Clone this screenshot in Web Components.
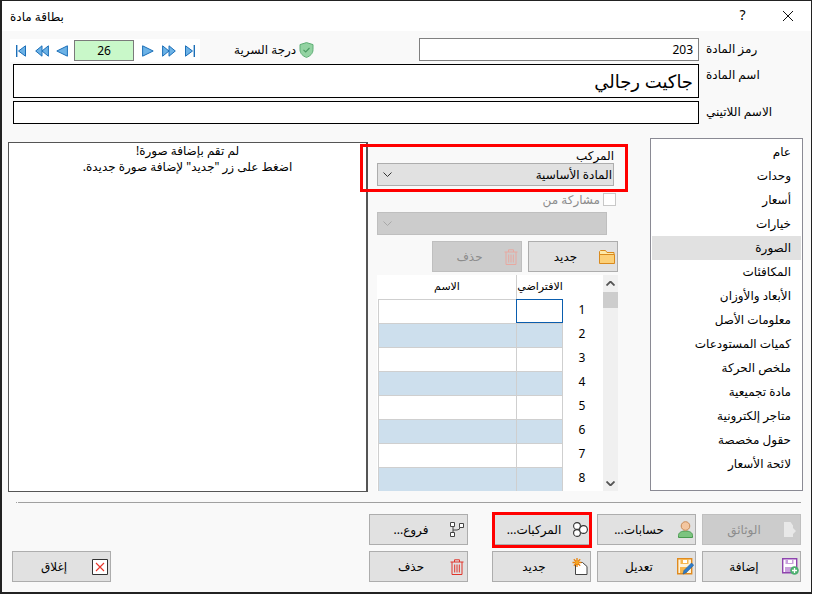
<!DOCTYPE html>
<html lang="ar">
<head>
<meta charset="utf-8">
<title>بطاقة مادة</title>
<style>
  html, body { margin: 0; padding: 0; background: #fff; }
  body { font: 12px "Noto Sans", "DejaVu Sans", sans-serif; color: #000; }
</style>
</head>
<body>
<item-card></item-card>

<script>
/* ── Icons ─────────────────────────────────────────── */
const ICONS = {
  folder: '<svg width="16" height="15" viewBox="0 0 16 15"><path d="M.5 14V2.500l1-1h5l1.500 2h7v2" fill="#fde9a8" stroke="#d98a1e"/><path d="M.5 14.500V5.500h15v9z" fill="#fcd078" stroke="#d98a1e"/></svg>',
  trash: '<svg width="14" height="16" viewBox="0 0 14 16" fill="none" stroke="#e0352b"><path d="M.5 3h13M4.500 3V.8h5V3M2 3v12.500h10V3M4.700 5.500v8M7 5.500v8M9.300 5.500v8"/></svg>',
  trashOff: '<svg width="14" height="16" viewBox="0 0 14 16" fill="none" stroke="#e8a8a0"><path d="M.5 3h13M4.500 3V.8h5V3M2 3v12.500h10V3M4.700 5.500v8M7 5.500v8M9.300 5.500v8"/></svg>',
  save: '<svg width="17" height="17" viewBox="0 0 17 17"><path d="M.7.7h14v14H.7z" fill="#fff" stroke="#8e44ad" stroke-width="1.400"/><path d="M3.500 1h8v5h-8zM3 9h9v5H3z" fill="#c9a0dc"/><path d="M6 2h4v3H6z" fill="#fff"/><circle cx="12.500" cy="12.500" r="4.300" fill="#4caf70"/><path d="M12.500 10v5M10 12.500h5" stroke="#fff" stroke-width="1.300"/></svg>',
  edit: '<svg width="17" height="17" viewBox="0 0 17 17"><path d="M.7.7h14v15H.7z" fill="#fff3d8" stroke="#e08a1e" stroke-width="1.400"/><path d="M3.500 1h8v5h-8z" fill="#f6b64e"/><path d="M6 2h4v3H6z" fill="#fff"/><path d="M3 9h7v6H3z" fill="#f6b64e"/><path d="M6 16l1-3.500 7.500-7.500 2.200 2.200-7.500 7.500z" fill="#2f7cc9" stroke="#1d5c9c" stroke-width=".6"/></svg>',
  add: '<svg width="16" height="17" viewBox="0 0 16 17"><path d="M3.500 4.500h7l4.500 4v8H3.500z" fill="#fff" stroke="#444"/><path d="M5 0v9M.5 4.500h9M1.800 1.300l6.400 6.400M8.200 1.300L1.800 7.700" stroke="#e8820c" stroke-width="1.300"/><circle cx="5" cy="4.500" r="1.800" fill="#f5a623"/></svg>',
  close: '<svg width="16" height="16" viewBox="0 0 16 16"><path d="M.5.5h15v15H.5z" fill="#fff" stroke="#333"/><path d="M4 4l8 8M12 4l-8 8" stroke="#e8352b" stroke-width="1.100"/></svg>',
  doc: '<svg width="12" height="15" viewBox="0 0 12 15"><path d="M0 0h6.500L9 3.500V6l3 3-3 3v3H0z" fill="#e8e8e8"/></svg>',
  person: '<svg width="15" height="17" viewBox="0 0 15 17"><path d="M.5 16.500v-2c0-3 3-4.500 7-4.500s7 1.500 7 4.500v2z" fill="#7cc47f" stroke="#4a9a50"/><circle cx="7.500" cy="5" r="4.300" fill="#f3c6a0" stroke="#c98a55"/></svg>',
  parts: '<svg width="16" height="15" viewBox="0 0 16 15" fill="#fff" stroke="#333" stroke-width="1.100"><circle cx="5" cy="4" r="3.400"/><circle cx="5" cy="11" r="3.400"/><circle cx="11.500" cy="7.500" r="3.900"/></svg>',
  branch: '<svg width="14" height="15" viewBox="0 0 14 15" fill="#fff" stroke="#444"><path d="M3 3v9M3 8h4q3 0 3-3" fill="none"/><path d="M.5.500h4v4h-4zM9.500 1.500h4v4h-4zM.5 10.500h4v4h-4z"/></svg>',
  first: '<svg width="10" height="12" viewBox="0 0 10 12"><path d="M.7 0v12" stroke="#1c6fb8" stroke-width="1.400"/><path d="M9.500.8L2.500 6l7 5.200z" fill="#6cb2e6" stroke="#1c6fb8"/></svg>',
  prevPage: '<svg width="14" height="12" viewBox="0 0 14 12" fill="#6cb2e6" stroke="#1c6fb8"><path d="M7 .8L.7 6 7 11.200z"/><path d="M13.400.8L7 6l6.400 5.200z"/></svg>',
  prev: '<svg width="12" height="12" viewBox="0 0 12 12"><path d="M11.400.8L.8 6l10.600 5.200z" fill="#6cb2e6" stroke="#1c6fb8"/></svg>',
  next: '<svg width="12" height="12" viewBox="0 0 12 12"><path d="M.6.8L11.200 6 .6 11.200z" fill="#6cb2e6" stroke="#1c6fb8"/></svg>',
  nextPage: '<svg width="14" height="12" viewBox="0 0 14 12" fill="#6cb2e6" stroke="#1c6fb8"><path d="M.6.8L7 6 .6 11.200z"/><path d="M7 .8L13.300 6 7 11.200z"/></svg>',
  last: '<svg width="10" height="12" viewBox="0 0 10 12"><path d="M9.300 0v12" stroke="#1c6fb8" stroke-width="1.400"/><path d="M.5.8l7 5.200-7 5.200z" fill="#6cb2e6" stroke="#1c6fb8"/></svg>',
  shield: '<svg width="15" height="16" viewBox="0 0 15 16"><path d="M7.500.6l6.500 2v5c0 4-3 6.600-6.500 7.800C4 14.200 1 11.600 1 7.600v-5z" fill="#93d3a2" stroke="#5fae76"/><path d="M4.500 7.800l2.200 2.200 3.800-4" fill="none" stroke="#4b9a63" stroke-width="1.100"/></svg>',
  chevron: '<svg width="9" height="5" viewBox="0 0 9 5" fill="none" stroke="currentColor"><path d="M.5.500l4 4 4-4"/></svg>',
};

/* ── <title-bar> ───────────────────────────────────── */
class TitleBar extends HTMLElement {
  connectedCallback() {
    this.attachShadow({ mode: "open" }).innerHTML = `
      <style>
        :host { display: flex; height: 30px; background: #fff; align-items: center; }
        .cap { width: 46px; text-align: center; font-size: 14px; }
        .cap svg { display: block; margin: auto; }
        .help { padding: 0 0 3px 1px; box-sizing: border-box; }
        .title { margin-right: auto; padding-left: 8px; font-size: 12px; }
      </style>
      <div class="cap"><svg width="10" height="10" viewBox="0 0 10 10" stroke="#111" fill="none"><path d="M0 0l10 10M10 0L0 10"/></svg></div>
      <div class="cap help">?</div>
      <div class="title"><slot></slot></div>`;
  }
}
customElements.define("title-bar", TitleBar);

/* ── <record-nav> ──────────────────────────────────── */
class RecordNav extends HTMLElement {
  connectedCallback() {
    const cell = (name, w) => `<span class="cell" style="width:${w}px">${ICONS[name]}</span>`;
    this.attachShadow({ mode: "open" }).innerHTML = `
      <style>
        :host { display: flex; direction: ltr; width: 190px; height: 23px; margin-top: 1px; background: #fff; align-items: center; }
        .cell { display: flex; justify-content: center; align-items: center; }
        .cell svg { display: block; }
        .num { box-sizing: border-box; width: 60px; height: 21px; margin: 0 2px; background: #c9f8c9; border: 1px solid #7a7a7a;
               text-align: center; line-height: 19px; font-size: 12px; }
      </style>
      ${cell("first", 22)}${cell("prevPage", 20)}${cell("prev", 20)}
      <div class="num">26</div>
      ${cell("next", 23)}${cell("nextPage", 20)}${cell("last", 21)}`;
  }
}
customElements.define("record-nav", RecordNav);

/* ── <text-field> ──────────────────────────────────── */
class TextField extends HTMLElement {
  connectedCallback() {
    this.attachShadow({ mode: "open" }).innerHTML = `
      <style>
        :host { display: flex; box-sizing: border-box; align-items: center; background: #fff;
                border: 1px solid var(--edge, #000); padding: 0 5px; font-size: var(--size, 12px); }
      </style>
      <slot></slot>`;
  }
}
customElements.define("text-field", TextField);

/* ── <combo-box> ───────────────────────────────────── */
class ComboBox extends HTMLElement {
  connectedCallback() {
    const off = this.hasAttribute("disabled");
    this.attachShadow({ mode: "open" }).innerHTML = `
      <style>
        :host { display: flex; box-sizing: border-box; height: 23px; align-items: center; justify-content: space-between;
                padding: 0 1px 0 5px; background: ${off ? "#ccc" : "#e1e1e1"}; border: 1px solid ${off ? "#bfbfbf" : "#adadad"};
                color: ${off ? "#a8a8a8" : "#333"}; }
        .text { color: #000; }
        svg { display: block; }
      </style>
      <span class="text"><slot></slot></span>${ICONS.chevron}`;
  }
}
customElements.define("combo-box", ComboBox);

/* ── <win-button> ──────────────────────────────────── */
class WinButton extends HTMLElement {
  connectedCallback() {
    const off = this.hasAttribute("disabled");
    this.attachShadow({ mode: "open" }).innerHTML = `
      <style>
        :host { display: flex; position: relative; box-sizing: border-box; height: 31px; align-items: center;
                background: ${off ? "#ccc" : "#e1e1e1"}; border: 1px solid ${off ? "#bfbfbf" : "#adadad"};
                color: ${off ? "#8c8c8c" : "#000"}; padding-right: 1px; }
        :host([mark])::after { content: ""; position: absolute; inset: -3px -2px -4px -1px; border: 3px solid #f00; pointer-events: none; }
        .icon { width: 18px; display: flex; justify-content: center; flex: none; }
        .icon svg { display: block; }
        .label { flex: 1; text-align: center; padding-left: 4px; }
      </style>
      <span class="icon">${ICONS[this.getAttribute("icon")] || ""}</span>
      <span class="label"><slot></slot></span>`;
  }
}
customElements.define("win-button", WinButton);

/* ── <tab-list> ────────────────────────────────────── */
class TabList extends HTMLElement {
  connectedCallback() {
    const selected = Number(this.getAttribute("selected"));
    const items = this.getAttribute("items").split("|");
    this.attachShadow({ mode: "open" }).innerHTML = `
      <style>
        :host { display: block; box-sizing: border-box; flex: none; width: 153px; height: 353px; margin-right: 8px;
                padding: 1px; background: #fff; border: 1px solid #8a8a94; }
        div { height: 24px; line-height: 24px; padding-right: 10px; }
        .on { background: #e1e1e1; }
      </style>
      ${items.map((t, i) => `<div class="${i === selected ? "on" : ""}">${t}</div>`).join("")}`;
  }
}
customElements.define("tab-list", TabList);

/* ── <variant-grid> ────────────────────────────────── */
class VariantGrid extends HTMLElement {
  connectedCallback() {
    let rows = "";
    for (let n = 1; n <= 8; n++) {
      const alt = n % 2 === 0 ? " alt" : "";
      rows += `<div class="num">${n}</div>
        <div class="cell def${alt}${n === 1 ? " active" : ""}"></div>
        <div class="cell${alt}"></div>`;
    }
    this.attachShadow({ mode: "open" }).innerHTML = `
      <style>
        :host { display: flex; height: 216px; margin-top: 3px; background: #fff; overflow: hidden; }
        .bar { flex: none; width: 15px; background: #f0f0f0; display: flex; flex-direction: column; align-items: center; color: #555; }
        .arrow { height: 17px; display: flex; align-items: center; justify-content: center; }
        .arrow svg { stroke-width: 1.8; }
        .up svg { transform: rotate(180deg); }
        .thumb { align-self: stretch; height: 16px; background: #cdcdcd; }
        .down { margin-top: auto; height: 15px; }
        .table { flex: 1; display: grid; grid-template-columns: 40px 47px 138px; grid-auto-rows: 24px; }
        .head { display: flex; align-items: center; justify-content: center; padding-bottom: 3px; box-sizing: border-box; font-size: 11px; }
        .head.d { border-left: 1px solid #cfcfcf; }
        .num { display: flex; align-items: center; justify-content: center; padding: 0 2px 3px 0; box-sizing: border-box; }
        .cell { box-sizing: border-box; border-top: 1px solid #cfcfcf; border-left: 1px solid #cfcfcf; }
        .def { border-right: 1px solid #cfcfcf; }
        .alt { background: #cddfed; }
        .active { border: 1px solid #0a5dae; }
      </style>
      <div class="bar">
        <span class="arrow up">${ICONS.chevron}</span>
        <span class="thumb"></span>
        <span class="arrow down">${ICONS.chevron}</span>
      </div>
      <div class="table">
        <div></div><div class="head d">الافتراضي</div><div class="head">الاسم</div>
        ${rows}
      </div>`;
  }
}
customElements.define("variant-grid", VariantGrid);

/* ── <item-card> ───────────────────────────────────── */
class ItemCard extends HTMLElement {
  connectedCallback() {
    this.attachShadow({ mode: "open" }).innerHTML = `
      <style>
        :host { display: block; box-sizing: border-box; width: 812px; height: 594px; direction: rtl; background: #f9f9f9;
                border: 2px solid #222; border-top-width: 1px; border-right-width: 1px; overflow: hidden; }
        .head { display: grid; grid-template-columns: 112px 1fr; grid-template-rows: 23px 34px 23px; row-gap: 3px;
                margin: 7px 0 0 11px; }
        .lab { text-align: left; padding-left: 7px; line-height: 15px; padding-top: 3px; }
        .top { display: flex; align-items: flex-start; }
        .top text-field { width: 280px; height: 23px; --edge: #808080; }
        .sec { display: flex; align-items: center; gap: 3px; margin: 3px auto 0 34px; }
        .sec svg { display: block; }
        record-nav { margin-left: -3px; }
        .main { display: flex; margin-top: 14px; height: 354px; }
        .mid { flex: none; box-sizing: border-box; width: 282px; padding: 10px 32px 0 9px; }
        .mark { position: relative; }
        .mark::after { content: ""; position: absolute; inset: -4px -10px -6px -17px; border: 3px solid #f00; pointer-events: none; }
        .mark .cap { height: 15px; line-height: 15px; margin-right: 4px; }
        .mark combo-box { width: 237px; margin-right: 4px; }
        .share { display: flex; align-items: center; gap: 3px; height: 14px; margin: 6px 2px 0 0; color: #8c8c8c; }
        .check { box-sizing: border-box; width: 13px; height: 13px; background: #fff; border: 1px solid #c8c8c8; }
        .mid > combo-box { width: 230px; margin: 6px 11px 0 0; }
        .acts { display: flex; gap: 6px; margin-top: 6px; }
        .acts win-button { width: 90px; }
        .pic { flex: none; box-sizing: border-box; width: 360px; height: 350px; margin-top: 4px; background: #fff;
               border: 1px solid #555; border-right-width: 2px; text-align: center; line-height: 16px; }
        .sep { height: 1px; margin: 10px 10px 0 14px;
               background: linear-gradient(to right, #a0a0a0 1px, transparent 1px, transparent 2px, #a0a0a0 2px); }
        .foot { display: grid; grid-template-columns: 99px 99px 99px 117px 1fr 99px; grid-auto-rows: 31px; gap: 6px;
                margin: 11px 10px 0 10px; }
        .foot .end { justify-self: end; width: 99px; }
      </style>
      <title-bar>بطاقة مادة</title-bar>

      <div class="head">
        <div class="lab">رمز المادة</div>
        <div class="top">
          <text-field>203</text-field>
          <div class="sec">${ICONS.shield}<span>درجة السرية</span></div>
          <record-nav></record-nav>
        </div>
        <div class="lab">اسم المادة</div>
        <text-field style="--size:18px">جاكيت رجالي</text-field>
        <div class="lab">الاسم اللاتيني</div>
        <text-field></text-field>
      </div>

      <div class="main">
        <tab-list selected="4" items="عام|وحدات|أسعار|خيارات|الصورة|المكافئات|الأبعاد والأوزان|معلومات الأصل|كميات المستودعات|ملخص الحركة|مادة تجميعية|متاجر إلكترونية|حقول مخصصة|لائحة الأسعار"></tab-list>
        <div class="mid">
          <div class="mark">
            <div class="cap">المركب</div>
            <combo-box>المادة الأساسية</combo-box>
          </div>
          <div class="share"><span class="check"></span><span>مشاركة من</span></div>
          <combo-box disabled></combo-box>
          <div class="acts">
            <win-button icon="folder">جديد</win-button>
            <win-button icon="trashOff" disabled>حذف</win-button>
          </div>
          <variant-grid></variant-grid>
        </div>
        <div class="pic">لم تقم بإضافة صورة!<br>اضغط على زر "جديد" لإضافة صورة جديدة.</div>
      </div>

      <div class="sep"></div>

      <div class="foot">
        <win-button icon="doc" disabled>الوثائق</win-button>
        <win-button icon="person">حسابات...</win-button>
        <win-button icon="parts" mark>المركبات...</win-button>
        <win-button class="end" icon="branch">فروع...</win-button>
        <span></span><span></span>
        <win-button icon="save">إضافة</win-button>
        <win-button icon="edit">تعديل</win-button>
        <win-button icon="add">جديد</win-button>
        <win-button class="end" icon="trash">حذف</win-button>
        <span></span>
        <win-button icon="close">إغلاق</win-button>
      </div>`;
  }
}
customElements.define("item-card", ItemCard);
</script>
</body>
</html>
